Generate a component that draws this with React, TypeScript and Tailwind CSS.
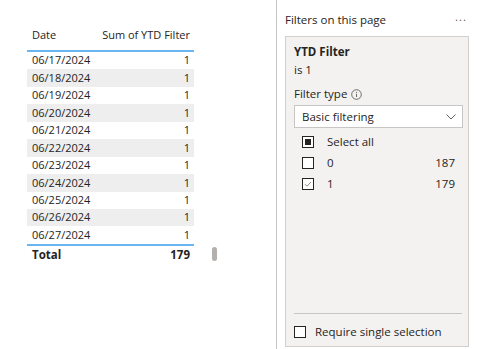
import React from "react";

const rows = [
  "06/17/2024",
  "06/18/2024",
  "06/19/2024",
  "06/20/2024",
  "06/21/2024",
  "06/22/2024",
  "06/23/2024",
  "06/24/2024",
  "06/25/2024",
  "06/26/2024",
  "06/27/2024",
];

const font = { fontFamily: '"Segoe UI", "Open Sans", sans-serif' };

function Box({ checked, partial }: { checked?: boolean; partial?: boolean }) {
  return (
    <div className="w-[12px] h-[12px] border border-[#252423] bg-white flex items-center justify-center">
      {partial && <div className="w-[6px] h-[6px] bg-[#252423]" />}
      {checked && (
        <svg width="10" height="10" viewBox="0 0 10 10">
          <path d="M2 5.2 L4 7.2 L8 3" fill="none" stroke="#8a8886" strokeWidth="1" />
        </svg>
      )}
    </div>
  );
}

export default function App() {
  return (
    <div className="w-[477px] h-[349px] bg-white flex text-[#252423] text-[11.5px]" style={font}>
      {/* report canvas */}
      <div className="w-[277px] h-full border-r border-[#c8c6c4] flex pl-[27px] pt-[26px] text-[11px]">
        <div className="w-[167px] flex flex-col">
          <div className="h-[24px] flex justify-between pl-[5px] pr-[4px] pt-[1px] leading-[16px]">
            <span>Date</span>
            <span>Sum of YTD Filter</span>
          </div>
          <div className="h-[2px] bg-[#6ab4f0]" />
          {rows.map((d, i) => (
            <div
              key={d}
              className={
                "h-[17.45px] flex items-center justify-between pl-[5px] pr-[4px] " +
                (i % 2 === 1 ? "bg-[#eeeeee]" : "bg-white")
              }
            >
              <span>{d}</span>
              <span>1</span>
            </div>
          ))}
          <div className="h-[2px] bg-[#6ab4f0]" />
          <div className="h-[18px] flex items-center justify-between pl-[5px] pr-[4px] font-bold text-[11.5px]">
            <span>Total</span>
            <span>179</span>
          </div>
        </div>
        <div className="ml-[18px] mt-[221px] w-[5px] h-[14px] rounded-full bg-[#b3b0ad]" />
      </div>

      {/* filter pane */}
      <div className="flex-1 flex flex-col pl-[8px] pr-[8px]">
        <div className="h-[36px] flex justify-between pt-[12px] leading-[16px] pr-[2px]">
          <span>Filters on this page</span>
          <span className="text-[#605e5c] tracking-[1px] -mt-[3px]">...</span>
        </div>
        <div className="flex-1 mb-[2px] bg-[#f3f2f1] border border-[#d2d0ce] flex flex-col pl-[8px] pr-[5px]">
          <div className="pt-[6px] font-bold leading-[18px]">YTD Filter</div>
          <div className="leading-[18px]">is 1</div>
          <div className="mt-[7px] flex items-center gap-[4px] leading-[16px]">
            <span>Filter type</span>
            <svg width="11" height="11" viewBox="0 0 11 11">
              <circle cx="5.5" cy="5.5" r="4.8" fill="none" stroke="#605e5c" strokeWidth="0.9" />
              <path d="M5.5 4.8 V8" stroke="#605e5c" strokeWidth="0.9" />
              <circle cx="5.5" cy="3.3" r="0.6" fill="#605e5c" />
            </svg>
          </div>
          <div className="mt-[3px] h-[23px] bg-white border border-[#c8c6c4] flex items-center justify-between pl-[7px] pr-[6px]">
            <span>Basic filtering</span>
            <svg width="10" height="6" viewBox="0 0 10 6">
              <path d="M0.5 0.5 L5 5 L9.5 0.5" fill="none" stroke="#605e5c" strokeWidth="1" />
            </svg>
          </div>
          <div className="flex flex-col pl-[8px] pr-[8px] mt-[3px]">
            <div className="h-[21px] flex items-center gap-[13px]">
              <Box partial />
              <span>Select all</span>
            </div>
            <div className="h-[21px] flex items-center gap-[13px]">
              <Box />
              <span className="flex-1">0</span>
              <span>187</span>
            </div>
            <div className="h-[21px] flex items-center gap-[13px]">
              <Box checked />
              <span className="flex-1">1</span>
              <span>179</span>
            </div>
          </div>
          <div className="flex-1" />
          <div className="h-px bg-[#c8c6c4] mr-[1px]" />
          <div className="h-[32px] flex items-center gap-[9px] pt-[4px]">
            <Box />
            <span>Require single selection</span>
          </div>
        </div>
      </div>
    </div>
  );
}
